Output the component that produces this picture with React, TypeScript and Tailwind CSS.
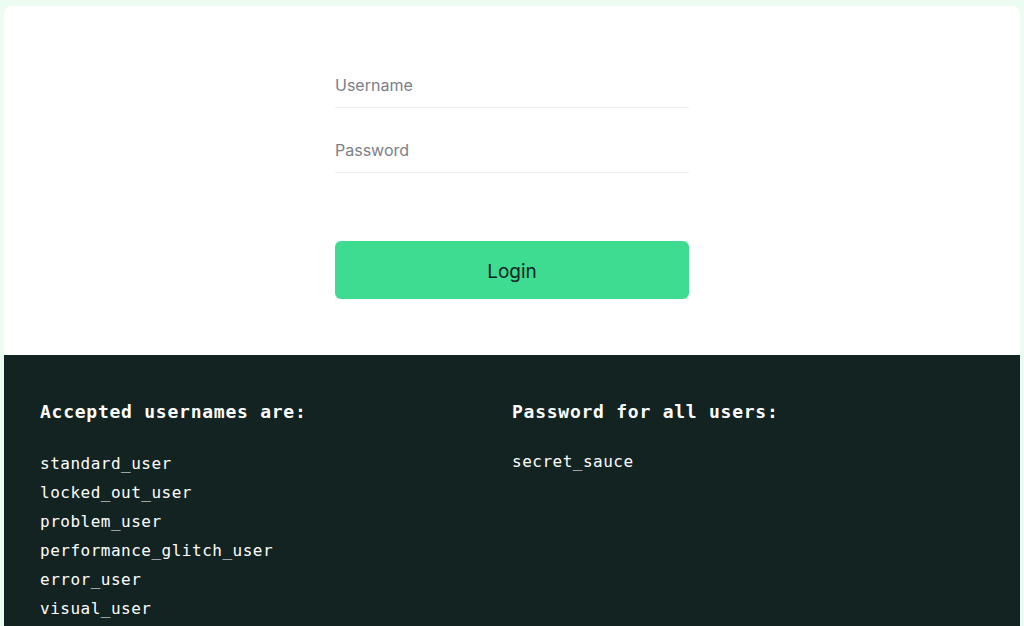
import React from 'react'

const usernames = [
  'standard_user',
  'locked_out_user',
  'problem_user',
  'performance_glitch_user',
  'error_user',
  'visual_user',
]

const mono = { fontFamily: '"DejaVu Sans Mono", "Liberation Mono", monospace' }

export default function App() {
  return (
    <div className="min-h-screen overflow-hidden bg-[#ecfcf3] px-1 pt-1.5">
      <div
        className="overflow-hidden rounded-t-lg bg-white"
        style={{ fontFamily: 'Inter, "Noto Sans", sans-serif' }}
      >
        {/* Login form */}
        <div className="flex justify-center pt-[56px] pb-[56px]">
          <form className="flex w-[354px] flex-col" onSubmit={(e) => e.preventDefault()}>
            <input
              type="text"
              placeholder="Username"
              className="h-[46px] border-b border-[#ededed] text-base text-[#484c55] outline-none placeholder:text-[#7b7f87]"
            />
            <input
              type="password"
              placeholder="Password"
              className="mt-[19px] h-[46px] border-b border-[#ededed] text-base text-[#484c55] outline-none placeholder:text-[#7b7f87]"
            />
            <button
              type="submit"
              className="mt-[68px] h-[58px] rounded-md bg-[#3ddc91] pt-1 text-[19px] text-[#132322]"
            >
              Login
            </button>
          </form>
        </div>

        {/* Credentials */}
        <div className="grid h-[300px] grid-cols-2 bg-[#132322] px-9 pt-[45px] text-white" style={mono}>
          <div>
            <h4 className="text-[18px] leading-6 font-bold tracking-[0.75px]">Accepted usernames are:</h4>
            <ul className="mt-[25px]">
              {usernames.map((u) => (
                <li key={u} className="text-base leading-[29px] tracking-[0.5px]">
                  {u}
                </li>
              ))}
            </ul>
          </div>
          <div>
            <h4 className="text-[18px] leading-6 font-bold tracking-[0.75px]">Password for all users:</h4>
            <p className="mt-[23px] text-base leading-[29px] tracking-[0.5px]">secret_sauce</p>
          </div>
        </div>
      </div>
    </div>
  )
}
